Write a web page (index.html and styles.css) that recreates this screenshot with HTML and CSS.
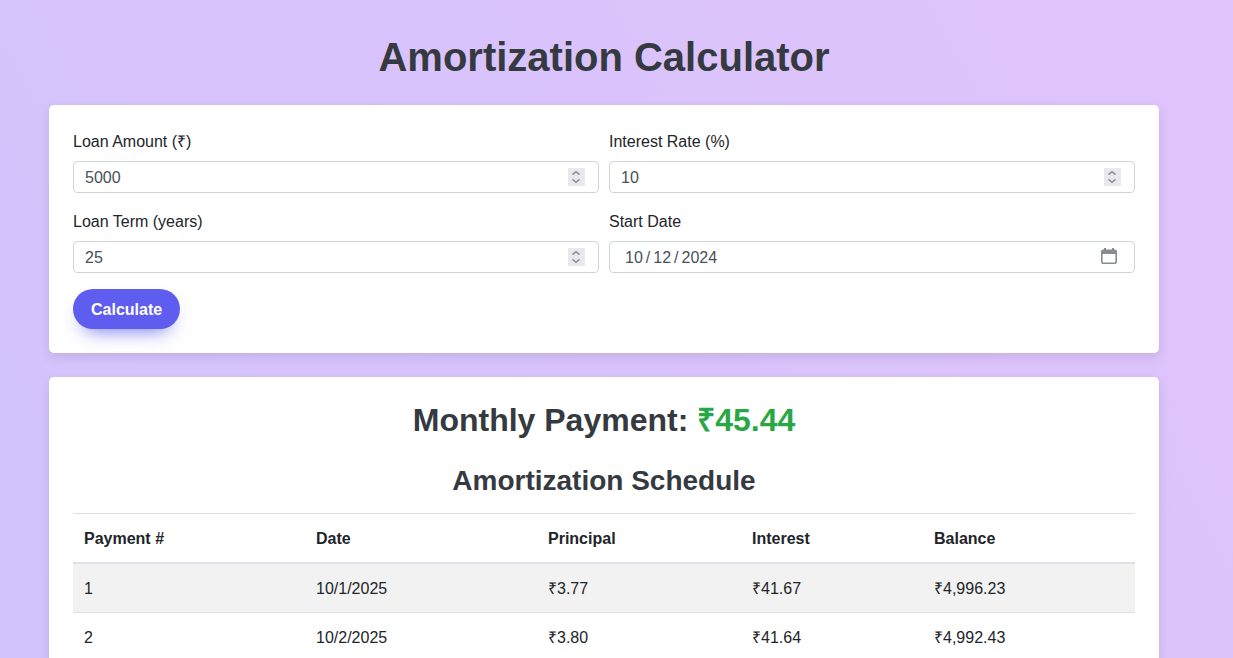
FILE: index.html
```html
<!DOCTYPE html>
<html lang="en">
<head>
<meta charset="utf-8">
<title>Amortization Calculator</title>
<link rel="stylesheet" href="styles.css">
</head>
<body>
<main class="page">
  <div class="container">
    <h1 class="title">Amortization Calculator</h1>

    <form class="card">
      <div class="fields">
        <div class="field">
          <label for="amount">Loan Amount (₹)</label>
          <div class="control">
            <input class="input" type="number" id="amount" value="5000">
            <svg class="spinner" viewBox="0 0 17 18" aria-hidden="true"><path d="M4.500 6.700 8 3.700 11.500 6.700M4.500 11.300 8 14.300 11.500 11.300"/></svg>
          </div>
        </div>
        <div class="field">
          <label for="rate">Interest Rate (%)</label>
          <div class="control">
            <input class="input" type="number" id="rate" value="10">
            <svg class="spinner" viewBox="0 0 17 18" aria-hidden="true"><path d="M4.500 6.700 8 3.700 11.500 6.700M4.500 11.300 8 14.300 11.500 11.300"/></svg>
          </div>
        </div>
        <div class="field">
          <label for="term">Loan Term (years)</label>
          <div class="control">
            <input class="input" type="number" id="term" value="25">
            <svg class="spinner" viewBox="0 0 17 18" aria-hidden="true"><path d="M4.500 6.700 8 3.700 11.500 6.700M4.500 11.300 8 14.300 11.500 11.300"/></svg>
          </div>
        </div>
        <div class="field">
          <label for="start">Start Date</label>
          <div class="control">
            <input class="input input-date" type="date" id="start" value="2024-10-12">
            <svg class="calendar" viewBox="0 0 16 16" aria-hidden="true"><path fill-rule="evenodd" d="M3 0h2v1.500h6V0h2v1.500h1a2 2 0 0 1 2 2V14a2 2 0 0 1-2 2H2a2 2 0 0 1-2-2V3.500a2 2 0 0 1 2-2h1zM1.600 6v7.700a.8.8 0 0 0 .8.8h11.200a.8.8 0 0 0 .8-.8V6z"/></svg>
          </div>
        </div>
      </div>
      <button class="button" type="button">Calculate</button>
    </form>

    <section class="card">
      <h2 class="payment">Monthly Payment: <span class="amount">₹45.44</span></h2>
      <h3 class="subtitle">Amortization Schedule</h3>
      <table class="schedule">
        <colgroup>
          <col class="col-wide"><col class="col-wide"><col class="col-principal"><col class="col-interest"><col>
        </colgroup>
        <thead>
          <tr><th>Payment #</th><th>Date</th><th>Principal</th><th>Interest</th><th>Balance</th></tr>
        </thead>
        <tbody>
          <tr><td>1</td><td>10/1/2025</td><td>₹3.77</td><td>₹41.67</td><td>₹4,996.23</td></tr>
          <tr><td>2</td><td>10/2/2025</td><td>₹3.80</td><td>₹41.64</td><td>₹4,992.43</td></tr>
        </tbody>
      </table>
    </section>
  </div>
</main>
</body>
</html>
```
FILE: styles.css
```css
*, *::before, *::after { box-sizing: border-box; }

body {
  margin: 0;
  font-family: "Liberation Sans", Arial, sans-serif;
  font-size: 16px;
  line-height: 24px;
  color: #212529;
}

.page {
  height: 100vh;
  overflow: hidden;
  padding: 33px 25px 0 0;
  background: linear-gradient(62deg, #8ec5fc 0%, #e0c3fc 100%) top left / 100% 15400px no-repeat;
}

.container {
  max-width: 1140px;
  margin: 0 auto;
  padding: 0 15px;
}

.title, .payment, .subtitle {
  margin: 0 0 24px;
  font-weight: 700;
  color: #343a40;
  text-align: center;
}
.title { font-size: 40px; line-height: 48px; }
.payment { font-size: 32px; line-height: 38px; }
.subtitle { margin-bottom: 14px; font-size: 28px; line-height: 36px; }
.amount { color: #28a745; }

.card {
  margin-bottom: 24px;
  padding: 24px;
  background: #fff;
  border-radius: 5px;
  box-shadow: 0 4px 12px rgba(0, 0, 0, 0.1);
}

.fields {
  display: grid;
  grid-template-columns: 1fr 1fr;
  gap: 16px 10px;
  margin-bottom: 16px;
}
.field { display: flex; flex-direction: column; gap: 6px; line-height: 26px; }
.control { position: relative; display: flex; }

.input {
  width: 100%;
  height: 32px;
  margin: 0;
  padding: 2px 12px 0 11px;
  border: 1px solid #ced4da;
  border-radius: 4px;
  background: #fff;
  color: #495057;
  font: inherit;
  appearance: textfield;
}
.input::-webkit-inner-spin-button { appearance: none; margin: 0; }
.input-date { padding-left: 14px; }
.input-date::-webkit-calendar-picker-indicator { display: none; }
.input-date::-webkit-datetime-edit-text { padding: 0 2px; }

.spinner {
  position: absolute;
  top: 7px;
  right: 14px;
  width: 17px;
  height: 18px;
  background: #e9e9ed;
  fill: none;
  stroke: #8f8f9d;
  stroke-width: 1.6;
  pointer-events: none;
}
.calendar {
  position: absolute;
  top: 7px;
  right: 18px;
  width: 16px;
  height: 16px;
  fill: #868c91;
  pointer-events: none;
}

.button {
  display: block;
  padding: 9px 18px 7px;
  border: 0;
  border-radius: 999px;
  background: #5e5df0;
  box-shadow: #5e5df0 0 10px 20px -10px;
  color: #fff;
  font: inherit;
  font-weight: 700;
}

.schedule {
  width: 100%;
  table-layout: fixed;
  border-collapse: separate;
  border-spacing: 0;
}
.schedule th, .schedule td {
  padding: 13px 12px 11px 11px;
  text-align: left;
  border-bottom: 1px solid #dee2e6;
}
.schedule th {
  border-top: 1px solid #dee2e6;
  border-bottom-width: 2px;
}
.schedule tbody tr:nth-child(odd) { background: #f2f2f2; }
.col-wide { width: 232px; }
.col-principal { width: 204px; }
.col-interest { width: 182px; }
```
